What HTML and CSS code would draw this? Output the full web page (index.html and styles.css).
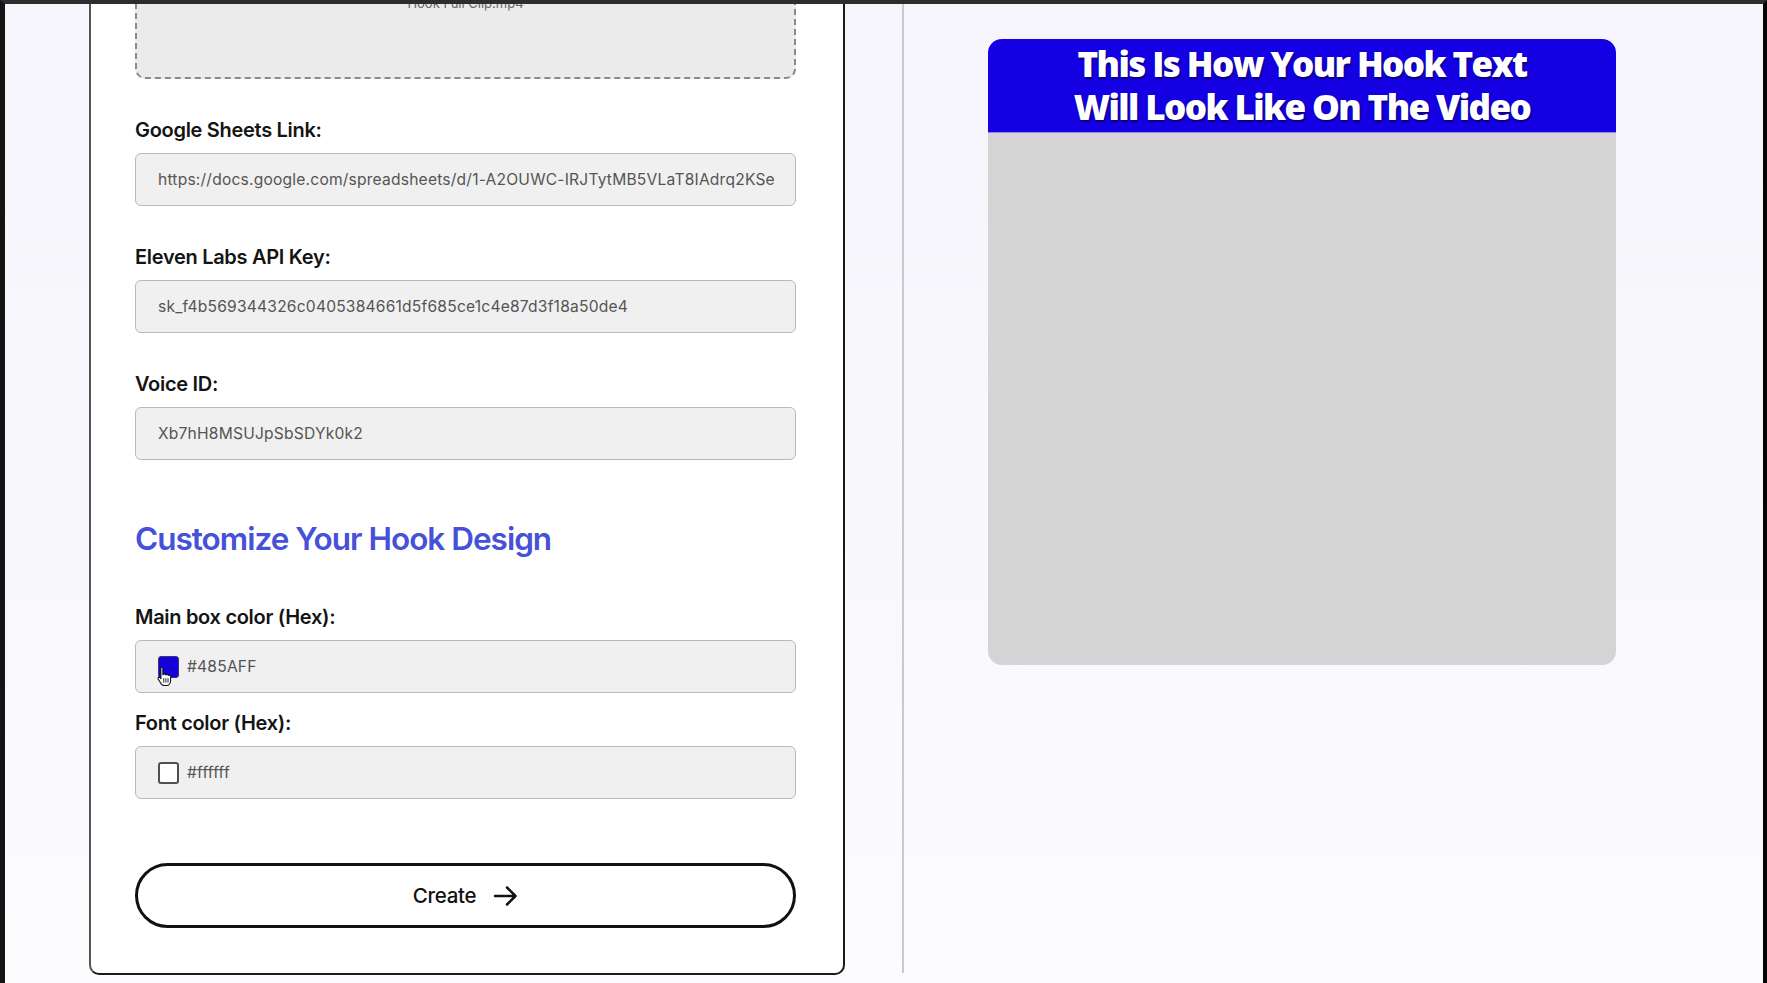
FILE: index.html
```html
<!DOCTYPE html>
<html lang="en">
<head>
<meta charset="utf-8">
<title>Hook Creator</title>
<link rel="stylesheet" href="styles.css">
</head>
<body>
<div class="frame">
  <div class="left-col">
    <form class="card">
      <div class="dropzone"><span class="dz-text">Hook Full Clip.mp4</span></div>

      <label class="label">Google Sheets Link:</label>
      <div class="input">https://docs.google.com/spreadsheets/d/1-A2OUWC-IRJTytMB5VLaT8IAdrq2KSe</div>

      <label class="label gap-lg">Eleven Labs API Key:</label>
      <div class="input">sk_f4b569344326c0405384661d5f685ce1c4e87d3f18a50de4</div>

      <label class="label gap-lg">Voice ID:</label>
      <div class="input">Xb7hH8MSUJpSbSDYk0k2</div>

      <h2 class="section-title">Customize Your Hook Design</h2>

      <label class="label gap-md">Main box color (Hex):</label>
      <div class="input color-input">
        <span class="swatch swatch-blue"></span>
        <span>#485AFF</span>
        <svg class="cursor" width="16" height="20" viewBox="0 0 18 22">
          <path d="M5 1.5c1 0 1.6.7 1.6 1.7v6.3l.3-.1c.4-.9 2.6-1 3 .3.6-.8 2.5-.7 2.8.6.7-.6 2.5-.3 2.6 1.2v4.6c0 2.6-1.6 5.6-4.6 5.6H8.2c-1.6 0-2.6-.7-3.4-1.8L1.4 14.6c-.7-1-.2-2.2 1-2.3.6 0 1.1.3 1.4.8l.6.9V3.2C3.4 2.2 4 1.5 5 1.5z" fill="#fff" stroke="#111" stroke-width="1.2" stroke-linejoin="round"/>
          <path d="M7.6 14v4M10 14v4M12.4 14v4" stroke="#111" stroke-width="1" stroke-linecap="round"/>
        </svg>
      </div>

      <label class="label gap-sm">Font color (Hex):</label>
      <div class="input color-input">
        <span class="swatch swatch-white"></span>
        <span>#ffffff</span>
      </div>

      <button type="button" class="create-btn">
        <span>Create</span>
        <svg width="25" height="24" viewBox="0 0 25 24"><path d="M2 12h20M14 3.5l8.5 8.5-8.5 8.5" fill="none" stroke="#111" stroke-width="2.5" stroke-linecap="round" stroke-linejoin="round"/></svg>
      </button>
    </form>
  </div>

  <div class="divider"></div>

  <div class="preview-col">
    <div class="preview">
      <div class="preview-head">This Is How Your Hook Text<br>Will Look Like On The Video</div>
      <div class="preview-body"></div>
    </div>
  </div>
</div>
</body>
</html>
```

FILE: styles.css
```css
* { box-sizing: border-box; }

html, body {
  margin: 0;
  padding: 0;
  height: 100%;
  overflow: hidden;
}

body {
  font-family: "Inter", "Liberation Sans", sans-serif;
  color: #111;
  background: #1c1c1c;
}

.frame {
  height: 983px;
  display: flex;
  align-items: flex-start;
  border-top: 4px solid #2d2d2d;
  border-left: 5px solid #141414;
  border-right: 4px solid #050505;
  background: linear-gradient(180deg, #f5f5fb 0%, #f8f8fd 60%, #fcfcff 100%);
  overflow: hidden;
}

.left-col {
  padding-left: 84px;
  flex: 0 0 auto;
}

.card {
  width: 756px;
  margin-top: -35px;
  background: #fff;
  border: 2px solid #1a1a1a;
  border-left-color: #555;
  border-top: none;
  border-radius: 0 0 10px 10px;
  padding: 0 47px 45px 44px;
  display: flex;
  flex-direction: column;
}

.dropzone {
  height: 110px;
  background: #ebebeb;
  border: 2px dashed #8a8a8a;
  border-top: none;
  border-radius: 0 0 10px 10px;
  display: flex;
  justify-content: center;
  padding-top: 26px;
}

.dz-text {
  font-size: 13px;
  line-height: 16px;
  color: #666;
}

.label {
  display: block;
  font-size: 20px;
  font-weight: 600;
  line-height: 24px;
  letter-spacing: -0.3px;
  color: #141414;
  margin-top: 39px;
  margin-bottom: 11px;
}

.label.gap-lg { margin-top: 39px; }
.label.gap-md { margin-top: 46px; }
.label.gap-sm { margin-top: 18px; margin-bottom: 11px; }

.input {
  position: relative;
  height: 53px;
  background: #f0f0f0;
  border: 1px solid #b9b9b9;
  border-radius: 6px;
  padding: 0 20px 0 22px;
  display: flex;
  align-items: center;
  font-size: 15.6px;
  letter-spacing: 0.2px;
  color: #555;
  white-space: nowrap;
  overflow: hidden;
}

.section-title {
  margin: 59px 0 0;
  font-size: 31.5px;
  line-height: 40px;
  font-weight: 600;
  letter-spacing: -1px;
  color: #4650d8;
}

.color-input { gap: 8px; }

.swatch {
  width: 21px;
  height: 22px;
  border-radius: 3px;
  flex: 0 0 auto;
}

.swatch-blue {
  background: #1500dc;
  border: 1.5px solid #3a3a6a;
}

.swatch-white {
  background: #fff;
  border: 2px solid #505050;
}

.cursor {
  position: absolute;
  left: 21px;
  top: 25px;
}

.create-btn {
  margin-top: 64px;
  height: 65px;
  border: 3px solid #111;
  border-radius: 999px;
  background: #fff;
  display: flex;
  align-items: center;
  justify-content: center;
  gap: 17px;
  font-family: "Inter", "Liberation Sans", sans-serif;
  font-size: 20.5px;
  font-weight: 500;
  letter-spacing: -0.3px;
  color: #111;
  padding: 0;
  cursor: pointer;
}

.divider {
  flex: 0 0 auto;
  width: 2px;
  height: 969px;
  margin-left: 57px;
  background: #c9c9cf;
}

.preview-col {
  flex: 0 0 auto;
  padding-left: 84px;
  padding-top: 35px;
}

.preview {
  width: 628px;
}

.preview-head {
  height: 94px;
  background: #1400e2;
  border-radius: 14px 14px 0 0;
  border-bottom: 1px solid #8f8af0;
  color: #fff;
  text-align: center;
  font-family: "Open Sans", "Inter", sans-serif;
  font-weight: 800;
  font-size: 35px;
  line-height: 43px;
  letter-spacing: -1.6px;
  padding-top: 3px;
  text-shadow: 1px 2px 2px rgba(0, 0, 40, 0.55);
}

.preview-body {
  height: 532px;
  background: #d4d4d4;
  border-radius: 0 0 14px 14px;
}
```
